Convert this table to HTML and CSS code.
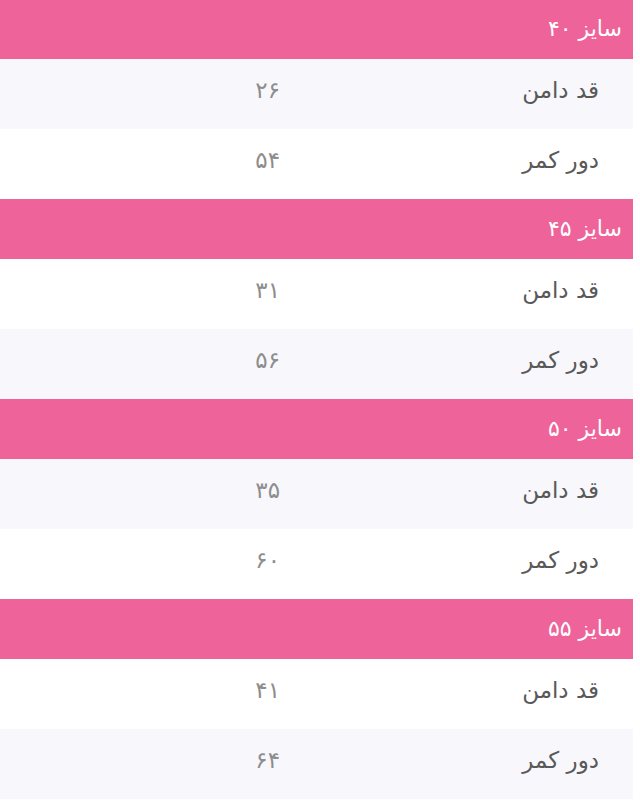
FILE: index.html
```html
<!DOCTYPE html>
<html lang="fa" dir="rtl">
<head>
<meta charset="utf-8">
<link rel="stylesheet" href="styles.css">
</head>
<body>
<table class="sizes">
  <colgroup>
    <col class="col-label">
    <col class="col-value">
  </colgroup>
  <tbody>
    <tr class="head"><th colspan="2">سایز ۴۰</th></tr>
    <tr><td class="label">قد دامن</td><td class="value">۲۶</td></tr>
    <tr><td class="label">دور کمر</td><td class="value">۵۴</td></tr>
    <tr class="head"><th colspan="2">سایز ۴۵</th></tr>
    <tr><td class="label">قد دامن</td><td class="value">۳۱</td></tr>
    <tr><td class="label">دور کمر</td><td class="value">۵۶</td></tr>
    <tr class="head"><th colspan="2">سایز ۵۰</th></tr>
    <tr><td class="label">قد دامن</td><td class="value">۳۵</td></tr>
    <tr><td class="label">دور کمر</td><td class="value">۶۰</td></tr>
    <tr class="head"><th colspan="2">سایز ۵۵</th></tr>
    <tr><td class="label">قد دامن</td><td class="value">۴۱</td></tr>
    <tr><td class="label">دور کمر</td><td class="value">۶۴</td></tr>
  </tbody>
</table>
</body>
</html>
```
FILE: styles.css
```css
html, body {
  margin: 0;
  padding: 0;
  background: #ffffff;
}
body {
  font-family: "DejaVu Sans", "Noto Sans", sans-serif;
  direction: rtl;
}
.sizes {
  margin: -1px 7px 0 0;
  width: 633px;
  border-collapse: collapse;
  table-layout: fixed;
}
.col-label {
  width: 353px;
}
.sizes tr:nth-child(even) {
  background: #f8f7fc;
}
.head th {
  background: #ee6399;
  color: #ffffff;
  height: 60px;
  padding: 0 11px 2px 0;
  text-align: right;
  font-size: 22px;
  font-weight: normal;
  box-sizing: border-box;
}
.label {
  height: 70px;
  padding: 0 34px 8px 0;
  text-align: right;
  color: #595959;
  font-size: 23px;
  box-sizing: border-box;
}
.value {
  height: 70px;
  padding: 0 0 8px 0;
  text-align: right;
  color: #8d8d8d;
  font-size: 23px;
  font-weight: normal;
  box-sizing: border-box;
}
```
